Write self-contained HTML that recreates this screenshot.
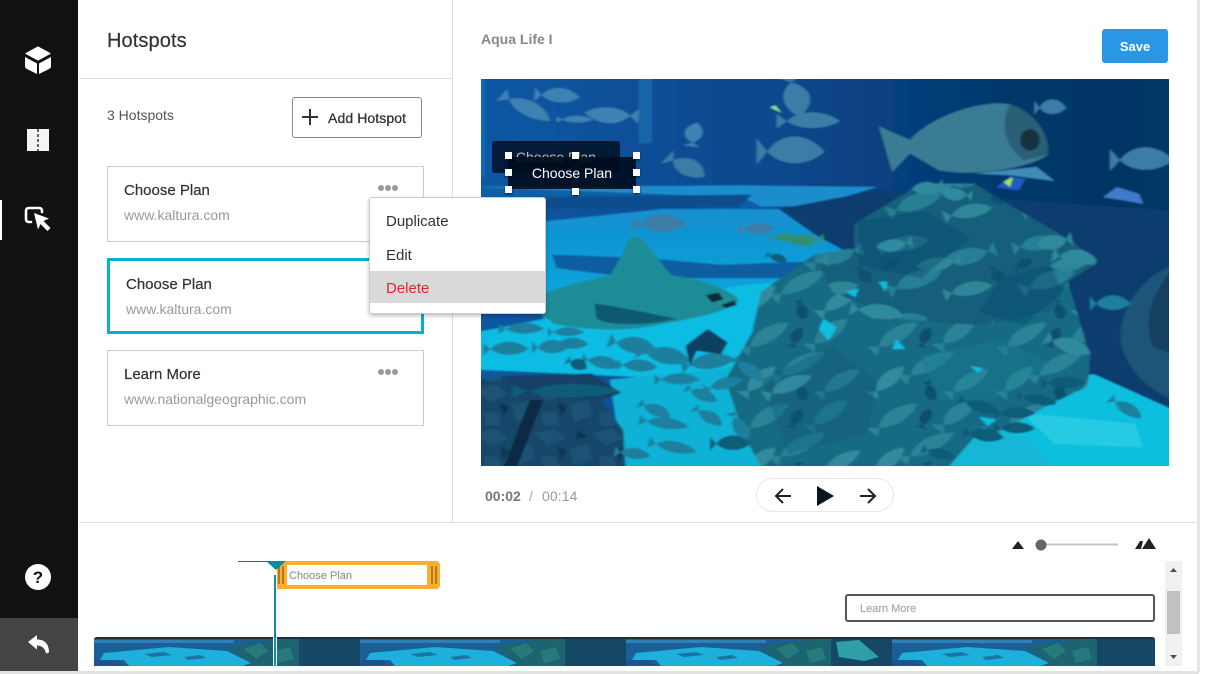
<!DOCTYPE html>
<html><head><meta charset="utf-8"><title>Hotspots</title>
<style>
html,body{margin:0;padding:0;background:#fff;}
body{width:1205px;height:674px;overflow:hidden;position:relative;font-family:"Liberation Sans",sans-serif;color:#333;}
.a{position:absolute;white-space:nowrap;}
.card{position:absolute;left:107px;width:315px;height:74px;border:1px solid #ccc;background:#fff;}
.t{font-size:15px;line-height:18px;color:#333;-webkit-text-stroke:.2px #333;}
.u{font-size:14px;line-height:18px;color:#999;}
.dots{position:absolute;width:20px;height:6px;left:378px;}
.dots i{position:absolute;top:0;width:6px;height:6px;border-radius:50%;background:#999;}
.h{position:absolute;width:7px;height:7px;background:#fff;box-shadow:0 1px 2px rgba(0,0,0,.6);}
</style></head><body>

<!-- frame edges -->
<div class="a" style="left:1197px;top:0;width:3px;height:672px;background:#e4e4e4"></div>
<div class="a" style="left:0;top:671px;width:1199px;height:3px;background:#e2e2e2"></div>

<!-- sidebar -->
<div class="a" style="left:0;top:0;width:78px;height:618px;background:#111"></div>
<div class="a" style="left:0;top:618px;width:78px;height:53px;background:#444"></div>
<div class="a" style="left:0;top:200px;width:2px;height:40px;background:#fff"></div>
<svg class="a" style="left:0;top:0" width="78" height="671" viewBox="0 0 78 671">
<path d="M38 47l12 6.500-12 6.500-12-6.500z" fill="#fff" stroke="#fff" stroke-linejoin="round"/>
<path d="M25 57l12 6.500v10.500l-10-5q-2-1-2-3z" fill="#fff"/>
<path d="M51 57l-12 6.500v10.500l10-5q2-1 2-3z" fill="#fff"/>
<rect x="27" y="129" width="22" height="22" fill="#f4f4f4"/>
<path d="M38 129v22" stroke="#666" stroke-width="2" stroke-dasharray="3 2"/>
<path d="M31 222h-2q-3 0-3-3v-8q0-3 3-3h10q3 0 3 3v1" fill="none" stroke="#fff" stroke-width="2.600" stroke-linecap="round"/>
<path d="M34 213l15 5.500-5.500 2.500 7 7-3 3-7-7-2.500 5.500z" fill="#fff"/>
<circle cx="38" cy="577" r="13" fill="#fff"/>
<text x="38" y="583" font-family="Liberation Sans,sans-serif" font-size="17" font-weight="bold" text-anchor="middle" fill="#111">?</text>
<path d="M28 642l9-7v4.500c8 0 12 5 12 13l-3 1c-1-5-4-8-9-8v4z" fill="#fff"/>
</svg>

<!-- dividers -->
<div class="a" style="left:79px;top:78px;width:373px;height:1px;background:#ddd"></div>
<div class="a" style="left:452px;top:0;width:1px;height:522px;background:#ddd"></div>
<div class="a" style="left:79px;top:522px;width:1118px;height:1px;background:#ddd"></div>

<!-- left panel -->
<div class="a" style="left:107px;top:29px;font-size:20px;line-height:24px;color:#333;letter-spacing:.1px;-webkit-text-stroke:.2px #333">Hotspots</div>
<div class="a" style="left:107px;top:107px;font-size:14px;line-height:17px;color:#555">3 Hotspots</div>
<div class="a" style="left:292px;top:97px;width:128px;height:39px;border:1px solid #888;border-radius:3px"></div>
<svg class="a" style="left:302px;top:109px" width="16" height="16"><path d="M8 0v16M0 8h16" stroke="#333" stroke-width="2"/></svg>
<div class="a" style="left:328px;top:110px;font-size:14px;line-height:17px;color:#333;letter-spacing:.1px;-webkit-text-stroke:.3px #333">Add Hotspot</div>

<div class="card" style="top:166px"></div>
<div class="a t" style="left:124px;top:182px">Choose Plan</div>
<div class="a u" style="left:124px;top:206px">www.kaltura.com</div>
<div class="dots" style="top:185px"><i style="left:0"></i><i style="left:7px"></i><i style="left:14px"></i></div>

<div class="card" style="top:258px;width:311px;height:70px;border:3px solid #04aed4"></div>
<div class="a t" style="left:126px;top:276px">Choose Plan</div>
<div class="a u" style="left:126px;top:300px">www.kaltura.com</div>

<div class="card" style="top:350px"></div>
<div class="a t" style="left:124px;top:366px">Learn More</div>
<div class="a u" style="left:124px;top:390px">www.nationalgeographic.com</div>
<div class="dots" style="top:369px"><i style="left:0"></i><i style="left:7px"></i><i style="left:14px"></i></div>

<!-- right panel header -->
<div class="a" style="left:481px;top:31px;font-size:14px;line-height:17px;font-weight:bold;color:#888">Aqua Life I</div>
<div class="a" style="left:1102px;top:29px;width:66px;height:34px;border-radius:3px;background:#2a96e6;color:#fff;font-size:13px;font-weight:bold;line-height:35px;text-align:center">Save</div>

<!-- video -->
<svg class="a" style="left:481px;top:79px" width="688" height="387" viewBox="0 0 1568 1161" preserveAspectRatio="none">
<defs>
<linearGradient id="bg" x1="0" x2="1" y1="0" y2="0"><stop offset="0" stop-color="#0b58a4"/><stop offset=".45" stop-color="#07468c"/><stop offset=".8" stop-color="#063768"/><stop offset="1" stop-color="#063d72"/></linearGradient>
<linearGradient id="fl" x1="0" x2="0" y1="0" y2="1"><stop offset="0" stop-color="#128fcf"/><stop offset=".5" stop-color="#10a4dc"/><stop offset="1" stop-color="#0bbde0"/></linearGradient>
<filter id="soft" x="-2%" y="-2%" width="104%" height="104%"><feGaussianBlur stdDeviation="2.400"/></filter>
<path id="f" d="M-50-16L-34 0C-15-24 25-26 52 0C25 20-15 18-34 0L-50 16Z"/>
<pattern id="sa" width="300" height="230" patternUnits="userSpaceOnUse">
<rect width="300" height="230" fill="#135e7c"/>
<g fill="#287f94">
<use href="#f" transform="translate(60 40) rotate(-12) scale(1.100 1.300)"/>
<use href="#f" transform="translate(210 70) rotate(165) scale(1.200 1.400)"/>
<use href="#f" transform="translate(85 150) rotate(-25) scale(1.300 1.400)"/>
</g>
<g fill="#2f8798">
<use href="#f" transform="translate(205 175) rotate(-15) scale(1.100 1.200)"/>
<use href="#f" transform="translate(140 95) rotate(170) scale(1 1.200)"/>
</g>
<g fill="#0f5172">
<use href="#f" transform="translate(30 100) rotate(-40) scale(.5 .8)"/>
<use href="#f" transform="translate(270 130) rotate(60) scale(.5 .9)"/>
</g>
</pattern>
<pattern id="sb" width="290" height="240" patternUnits="userSpaceOnUse">
<rect width="290" height="240" fill="#156a84"/>
<g fill="#298397">
<use href="#f" transform="translate(70 55) rotate(-40) scale(1.300 1.200)"/>
<use href="#f" transform="translate(210 45) rotate(-45) scale(1.200 1.200)"/>
<use href="#f" transform="translate(145 140) rotate(-35) scale(1.400 1.200)"/>
</g>
<g fill="#318b9c">
<use href="#f" transform="translate(55 185) rotate(-50) scale(1.100 1.100)"/>
<use href="#f" transform="translate(235 190) rotate(-40) scale(1.200 1.100)"/>
</g>
<g fill="#0e4f6e">
<use href="#f" transform="translate(140 55) rotate(-70) scale(.6 .8)"/>
<use href="#f" transform="translate(150 215) rotate(80) scale(.6 .8)"/>
</g>
</pattern>
<pattern id="rk" width="130" height="130" patternUnits="userSpaceOnUse">
<rect width="130" height="130" fill="#16476a"/>
<path d="M0 20L44 4L70 34L30 56ZM78 64L122 52L130 96L90 114ZM16 86L48 90L56 126L20 126Z" fill="#1c5375"/>
<path d="M52 56L74 70L60 100ZM96 8L122 30L92 38Z" fill="#103656"/>
</pattern>
</defs>
<rect width="1568" height="1161" fill="#0b4f8e"/>
<g transform="translate(-10 -10) scale(1.013)">
<g filter="url(#soft)">
<rect width="1568" height="1161" fill="url(#bg)"/>
<rect x="365" y="0" width="30" height="200" fill="#1766a8"/>
<rect x="0" y="0" width="18" height="300" fill="#0f6ab0"/>
<rect x="1340" y="0" width="228" height="620" fill="#053562" opacity=".7"/>
<!-- back wall band -->
<path d="M0 325L900 328L780 385L560 395L150 380L0 370Z" fill="#0a5ea6"/>
<path d="M0 330L600 325L900 330L760 385L640 388L600 360L300 345Z" fill="#1a8dcc"/>
<path d="M130 360L620 352L590 390L150 395Z" fill="#0b4e8e"/>
<!-- dark reef right -->
<path d="M680 395L900 340L1568 400L1568 1000L1400 890L1000 800Z" fill="#073e6e"/>
<!-- main floor -->
<path d="M150 432L420 395L680 395L760 470L885 560L925 612L820 800L520 900L0 870L0 760L150 720Z" fill="url(#fl)"/>
<path d="M170 530L380 540L550 560L860 545L920 580L700 600L470 600L300 590L180 570Z" fill="#0c5da0"/>
<path d="M0 760L600 620L925 590L900 800L480 900L0 870Z" fill="#0cbce2"/>
<!-- lower floors -->
<path d="M300 900L620 860L640 1161L330 1161Z" fill="#0eb2d6"/>
<path d="M1130 900L1390 885L1568 990L1568 1161L950 1161L1000 1010Z" fill="#0fbfdf"/>
<path d="M1230 1000L1480 1030L1500 1100L1300 1090Z" fill="#27cbe3"/>
<!-- school -->
<path d="M850 440L1000 320L1120 320L1220 400L1340 490L1395 555L1330 610L1380 830L1375 920L1280 980L1170 1060L1100 1161L640 1161L600 1060L560 900L620 760L640 640L760 530L850 510Z" fill="url(#sb)"/>
<path d="M850 440L1000 320L1120 320L1220 400L1340 490L1395 555L1330 610L1290 700L1130 740L950 720L800 640L760 530L850 510Z" fill="url(#sa)"/>
<!-- tonal variation over the school -->
<path d="M860 430L1010 400L1110 480L1000 600L860 560ZM1180 600L1290 560L1320 640L1230 740L1130 700Z" fill="#0e4f70" opacity=".45"/>
<path d="M640 900L800 800L900 900L880 1060L700 1120Z" fill="#0e5a78" opacity=".35"/>
<path d="M1000 830L1180 780L1290 850L1180 960L1040 960Z" fill="#1c7c90" opacity=".4"/>
<!-- gaps of floor showing through school -->
<path d="M780 720l30 25-18 40-22-35zM900 680l14 30-25 10zM945 780l20 30-30 0zM1110 860l30 6-12 14zM1130 1010l40 8-20 20zM905 610l20 0-6 30zM830 640l30 -10-8 26z" fill="#0dc0e2"/>
<path d="M1060 1161L1140 1040L1250 1080L1300 1161Z" fill="#14b6d6"/>
<!-- rock -->
<path d="M0 900L60 890L260 882L280 960L330 1050L335 1161L0 1161Z" fill="url(#rk)"/>
<path d="M150 960L90 1161L60 1161L120 960Z" fill="#0b2a44"/>
<path d="M60 890L260 882L325 940L270 965L100 930Z" fill="#123f66"/>
<!-- top fish -->
<g fill="#3d82b2">
<use href="#f" transform="translate(110 95) rotate(35) scale(1.300 1.300)"/>
<use href="#f" transform="translate(180 60) rotate(5) scale(1 1.300)"/>
<use href="#f" transform="translate(305 115) rotate(-175) scale(1.200 1.400)"/>
<use href="#f" transform="translate(220 130) scale(.8 .6)"/>
<use href="#f" transform="translate(490 175) rotate(-80) scale(.7 1.200)"/>
</g>
<g fill="#3a7da6">
<use href="#f" transform="translate(470 270) rotate(35) scale(1 1.500)"/>
<use href="#f" transform="translate(745 135) scale(1.400 1.400)"/>
<use href="#f" transform="translate(705 225) scale(1.500 2.400)"/>
<use href="#f" transform="translate(715 60) rotate(80) scale(1.200 1.800)"/>
<use href="#f" transform="translate(1495 250) scale(1.400 2)"/>
<use href="#f" transform="translate(1290 95) scale(.7 1.300)"/>
<use href="#f" transform="translate(630 455) scale(.8 1)"/>
<use href="#f" transform="translate(410 440) scale(1.200 1.600)"/>
</g>
<!-- big fish -->
<path d="M905 150L975 190C1030 110 1150 70 1200 85C1260 110 1290 180 1285 235C1240 275 1120 300 1040 280L975 230L935 285Z" fill="#3a7b95"/>
<path d="M1200 85C1260 110 1290 180 1285 235L1230 250C1180 200 1180 130 1200 85Z" fill="#2a5f78"/>
<ellipse cx="1245" cy="190" rx="22" ry="32" fill="#14303f"/>
<path d="M1120 290L1260 270L1300 312L1200 295Z" fill="#3f8cb8"/>
<path d="M1170 330l30-30 35 5-15 35z" fill="#1d5cc4"/><path d="M1186 315l20-15-6 30z" fill="#a8e83c"/>
<path d="M1410 360l30-30 50 20 10 30-40-10z" fill="#3c7ccb"/>
<path d="M672 88l14 22-26-16z" fill="#7fe88a"/>
<!-- right edge large fish -->
<path d="M1568 560C1490 600 1440 700 1450 800C1470 880 1510 930 1568 960Z" fill="#1b5578"/>
<path d="M1568 570C1520 640 1500 720 1520 800L1568 830Z" fill="#123f60"/>
<!-- ray -->
<path d="M150 645C220 610 280 600 300 590C330 540 335 480 350 478L370 480C400 520 420 570 440 592C500 600 570 630 590 665C570 700 480 720 420 735C340 760 250 755 175 735L140 700Z" fill="#1a8d97"/>
<path d="M265 675C300 680 340 690 450 720C400 738 300 745 270 720Z" fill="#0c5a70"/>
<path d="M515 650l30-8 10 20-25 10zM550 680l30-15 5 15-25 8z" fill="#0c2a3a"/>
<!-- individual fish on floor -->
<g fill="#1c7f9e">
<use href="#f" transform="translate(65 810) scale(1 1.200)"/>
<use href="#f" transform="translate(165 805) scale(.8 1.200)"/>
<use href="#f" transform="translate(210 795) scale(.8 1)"/>
<use href="#f" transform="translate(350 800) rotate(15) scale(1.100 1.500)"/>
<use href="#f" transform="translate(420 830) rotate(15) scale(1.200 1.500)"/>
<use href="#f" transform="translate(280 850) rotate(15) scale(.9 1.100)"/>
<use href="#f" transform="translate(360 860) rotate(5) scale(.9 1.100)"/>
<use href="#f" transform="translate(450 900) scale(1 1)"/>
<use href="#f" transform="translate(555 915) rotate(-20) scale(.9 1)"/>
<use href="#f" transform="translate(520 850) rotate(-10) scale(1.200 1.400)"/>
<use href="#f" transform="translate(610 870) rotate(45) scale(.9 1)"/>
<use href="#f" transform="translate(400 990) rotate(30) scale(.8 1)"/>
<use href="#f" transform="translate(520 1010) rotate(40) scale(.8 1)"/>
<use href="#f" transform="translate(420 1030) rotate(10) scale(1.100 1)"/>
<use href="#f" transform="translate(505 945) rotate(30) scale(.8 1)"/>
<use href="#f" transform="translate(440 1100) rotate(15) scale(1.100 1)"/>
<use href="#f" transform="translate(590 1040) rotate(70) scale(.9 1)"/>
<use href="#f" transform="translate(350 1120) rotate(10) scale(.8 1)"/>
<use href="#f" transform="translate(100 750) scale(1 1)"/>
<use href="#f" transform="translate(200 760) scale(.8 .8)"/>
<use href="#f" transform="translate(1425 675) scale(.9 1.300)"/>
<use href="#f" transform="translate(1460 985) rotate(40) scale(.9 1)"/>
</g>
<!-- school edge fish -->
<g fill="#2f8a9c">
<use href="#f" transform="translate(1015 330) rotate(170) scale(.7 1.100)"/>
<use href="#f" transform="translate(1080 350) rotate(-170) scale(.7 1.100)"/>
<use href="#f" transform="translate(1300 490) rotate(170) scale(.8 1.300)"/>
<use href="#f" transform="translate(1345 540) rotate(10) scale(1 1.400)"/>
<use href="#f" transform="translate(1330 800) rotate(25) scale(1.100 1.300)"/>
<use href="#f" transform="translate(940 500) rotate(170) scale(.8 1.100)"/>
<use href="#f" transform="translate(900 700) rotate(10) scale(1.200 1.300)"/>
<use href="#f" transform="translate(700 920) rotate(-30) scale(1.200 1.200)"/>
</g>
<g fill="#0f5b78">
<use href="#f" transform="translate(1130 980) rotate(25) scale(1 1)"/>
<use href="#f" transform="translate(1210 1000) scale(.9 1)"/>
<use href="#f" transform="translate(1140 1065) rotate(10) scale(.9 1.200)"/>
<use href="#f" transform="translate(1210 1045) scale(.9 1)"/>
<use href="#f" transform="translate(1320 910) scale(1 1)"/>
<use href="#f" transform="translate(1260 960) rotate(15) scale(.9 .9)"/>
<use href="#f" transform="translate(1040 1120) rotate(20) scale(.8 .9)"/>
<use href="#f" transform="translate(200 935) scale(2.400 1.200)"/>
<use href="#f" transform="translate(570 1090) scale(.9 1.300)"/>
<use href="#f" transform="translate(675 540) rotate(25) scale(.5 .7)"/>
<use href="#f" transform="translate(225 855) rotate(30) scale(.5 1)"/>
</g>
<path d="M470 800L520 750L565 790L550 825L495 815L480 860Z" fill="#0d3f60"/>
<g fill="#2f8f77">
<use href="#f" transform="translate(740 485) rotate(180) scale(.8 1.100)"/>
<use href="#f" transform="translate(690 480) scale(.6 .8)"/>
</g>
</g>
</g>
</svg>

<!-- overlays on video -->
<div class="a" style="left:492px;top:141px;width:128px;height:32px;background:rgba(2,16,38,.85);border-radius:3px;font-size:14px;line-height:32px;text-align:center;color:#b8bcc0">Choose Plan</div>
<div class="a" style="left:508px;top:157px;width:128px;height:32px;background:rgba(0,12,30,.9);font-size:14px;line-height:32px;text-align:center;color:#fff">Choose Plan</div>
<div class="h" style="left:505px;top:152px"></div><div class="h" style="left:572px;top:152px"></div><div class="h" style="left:633px;top:152px"></div>
<div class="h" style="left:505px;top:169px"></div><div class="h" style="left:633px;top:169px"></div>
<div class="h" style="left:505px;top:186px"></div><div class="h" style="left:572px;top:188px"></div><div class="h" style="left:633px;top:186px"></div>

<!-- context menu -->
<div class="a" style="left:369px;top:197px;width:175px;height:115px;background:#fff;border:1px solid #ccc;border-radius:3px;box-shadow:0 2px 4px rgba(0,0,0,.25)"></div>
<div class="a" style="left:370px;top:271px;width:175px;height:32px;background:#d9d9d9"></div>
<div class="a" style="left:386px;top:213px;font-size:15px;line-height:18px;color:#333">Duplicate</div>
<div class="a" style="left:386px;top:247px;font-size:15px;line-height:18px;color:#333">Edit</div>
<div class="a" style="left:386px;top:280px;font-size:15px;line-height:18px;color:#e8212b">Delete</div>

<!-- player controls -->
<div class="a" style="left:485px;top:488px;font-size:14px;line-height:17px;font-weight:bold;color:#777">00:02</div>
<div class="a" style="left:529px;top:488px;font-size:14px;line-height:17px;color:#aaa">/</div>
<div class="a" style="left:542px;top:488px;font-size:14px;line-height:17px;color:#999;letter-spacing:.1px">00:14</div>
<div class="a" style="left:756px;top:478px;width:136px;height:32px;border:1px solid #e6e6e6;border-radius:17px"></div>
<svg class="a" style="left:756px;top:478px" width="138" height="34">
<path d="M35 18h-15M27 11l-7 7 7 7" fill="none" stroke="#222" stroke-width="2"/>
<path d="M61 8l17 10-17 10z" fill="#0c1420"/>
<path d="M104 18h15M112 11l7 7-7 7" fill="none" stroke="#222" stroke-width="2"/>
</svg>

<!-- zoom slider -->
<svg class="a" style="left:1005px;top:530px" width="160" height="30">
<path d="M7 19l6-8 6 8z" fill="#222"/>
<rect x="36" y="13.500" width="77" height="2" fill="#c4c4c4"/>
<circle cx="36" cy="15" r="5.500" fill="#666"/>
<path d="M130 19l5-8 3 0-2 8zM137 19l7-11 7 11z" fill="#222"/>
</svg>

<!-- timeline -->
<div class="a" style="left:845px;top:594px;width:306px;height:24px;border:2px solid #555;border-radius:3px"></div>
<div class="a" style="left:860px;top:602px;font-size:11px;line-height:14px;color:#aaa;-webkit-text-stroke:.2px #aaa">Learn More</div>

<div class="a" style="left:238px;top:561px;width:72px;height:1px;background:#3a6470"></div>
<div class="a" style="left:277px;top:561px;width:163px;height:28px;background:#fbae2f;border-radius:0 4px 4px 0"></div>
<div class="a" style="left:287px;top:565px;width:140px;height:20px;background:#fff"></div>
<div class="a" style="left:289px;top:569px;font-size:11px;line-height:14px;color:#999;-webkit-text-stroke:.2px #999">Choose Plan</div>
<div class="a" style="left:278px;top:566px;width:2px;height:18px;background:#b5791f"></div>
<div class="a" style="left:282px;top:566px;width:2px;height:18px;background:#b5791f"></div>
<div class="a" style="left:431px;top:566px;width:2px;height:18px;background:#b5791f"></div>
<div class="a" style="left:435px;top:566px;width:2px;height:18px;background:#b5791f"></div>

<!-- film strip -->
<svg class="a" style="left:94px;top:637px" width="1061" height="29" viewBox="0 0 1061 29">
<defs>
<clipPath id="c"><path d="M0 29V3q0-3 3-3h1055q3 0 3 3v26z"/></clipPath>
<g id="fr">
<rect width="266" height="29" fill="#1a5f96"/>
<rect y="1" width="140" height="3" fill="#2f7fb8"/>
<path d="M6 21L10 14L75 8L133 12L157 24L143 29L37 29L30 21Z" fill="#1cb0da"/>
<path d="M50 15l20-2 8 3-20 2zM90 18l16-2 6 3-18 2z" fill="#1a76a0"/>
<path d="M0 21L22 21L34 29L0 29Z" fill="#1a5590"/>
<path d="M133 8L180 1L266 1L266 29L150 29L157 24Z" fill="#1d6370"/>
<path d="M150 10l16-6 8 8-12 8zM180 12l16-4 4 12-16 4z" fill="#267a7c"/>
<rect x="205" y="0" width="61" height="29" fill="#123f60" opacity=".75"/>
</g>
</defs>
<g clip-path="url(#c)">
<rect width="1061" height="29" fill="#222f38"/>
<use href="#fr" y="2"/>
<use href="#fr" x="266" y="2"/>
<use href="#fr" x="532" y="2"/>
<use href="#fr" x="798" y="2"/>
<path d="M742 5L765 3L785 20L770 24L745 20Z" fill="#2e9fa5"/>
</g>
</svg>

<!-- playhead -->
<div class="a" style="left:273px;top:575px;width:4px;height:91px;background:#fff"></div>
<div class="a" style="left:274px;top:575px;width:2px;height:91px;background:#0892a5"></div>
<svg class="a" style="left:264px;top:561px" width="24" height="11"><path d="M2 0h20l-10 9z" fill="#0b8c9e"/></svg>

<!-- scrollbar -->
<div class="a" style="left:1165px;top:561px;width:17px;height:105px;background:#f1f1f1"></div>
<div class="a" style="left:1167px;top:591px;width:13px;height:43px;background:#c1c1c1"></div>
<svg class="a" style="left:1165px;top:561px" width="17" height="105"><path d="M5 11l3.500-4 3.500 4zM5 94l3.500 4 3.500-4z" fill="#505050"/></svg>
</body></html>
